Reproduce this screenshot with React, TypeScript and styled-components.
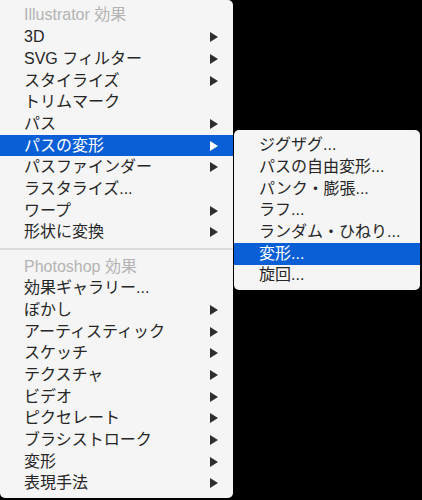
import React from "react";
import styled, { createGlobalStyle } from "styled-components";

const Global = createGlobalStyle`
  html, body {
    margin: 0;
    padding: 0;
    background: #000;
    height: 500px;
    overflow: hidden;
  }
  #root {
    height: 500px;
  }
`;

const Stage = styled.div`
  display: flex;
  align-items: flex-start;
  height: 500px;
  font-family: "Liberation Sans", "Noto Sans CJK JP", sans-serif;
  font-size: 16px;
`;

const Menu = styled.div`
  width: 233px;
  background: #f5f5f5;
  border-radius: 0 5px 5px 5px;
  padding: 4.65px 0 3.5px 0;
  box-sizing: border-box;
  display: flex;
  flex-direction: column;
`;

const SubMenu = styled.div`
  width: 186px;
  margin-top: 130px;
  margin-left: 1px;
  background: #f5f5f5;
  border-radius: 5px;
  padding: 4.5px 0 3.5px 0;
  display: flex;
  flex-direction: column;
  box-shadow: 0 0 0 0.5px rgba(0, 0, 0, 0.25);
`;

const Row = styled.div<{ $active?: boolean; $header?: boolean; $indent?: number }>`
  height: 21.7px;
  display: flex;
  align-items: center;
  justify-content: space-between;
  padding: 0 15px 0 ${(p) => p.$indent ?? 24}px;
  background: ${(p) => (p.$active ? "#0a5fd6" : "transparent")};
  color: ${(p) => (p.$header ? "#b3b3b3" : p.$active ? "#ffffff" : "#262626")};
  white-space: nowrap;
  line-height: 1;
`;

const Label = styled.span`
  display: block;
`;

const Separator = styled.div`
  height: 12.5px;
  display: flex;
  align-items: center;
  &::after {
    content: "";
    display: block;
    width: 100%;
    height: 2px;
    background: #dcdcdc;
  }
`;

const Arrow = ({ color }: { color: string }) => (
  <svg width="8" height="10" viewBox="0 0 8 10">
    <polygon points="0,0 8,5 0,10" fill={color} />
  </svg>
);

type Item = { label: string; sub?: boolean; active?: boolean; header?: boolean };

const group1: Item[] = [
  { label: "Illustrator 効果", header: true },
  { label: "3D", sub: true },
  { label: "SVG フィルター", sub: true },
  { label: "スタイライズ", sub: true },
  { label: "トリムマーク" },
  { label: "パス", sub: true },
  { label: "パスの変形", sub: true, active: true },
  { label: "パスファインダー", sub: true },
  { label: "ラスタライズ..." },
  { label: "ワープ", sub: true },
  { label: "形状に変換", sub: true },
];

const group2: Item[] = [
  { label: "Photoshop 効果", header: true },
  { label: "効果ギャラリー..." },
  { label: "ぼかし", sub: true },
  { label: "アーティスティック", sub: true },
  { label: "スケッチ", sub: true },
  { label: "テクスチャ", sub: true },
  { label: "ビデオ", sub: true },
  { label: "ピクセレート", sub: true },
  { label: "ブラシストローク", sub: true },
  { label: "変形", sub: true },
  { label: "表現手法", sub: true },
];

const subItems: Item[] = [
  { label: "ジグザグ..." },
  { label: "パスの自由変形..." },
  { label: "パンク・膨張..." },
  { label: "ラフ..." },
  { label: "ランダム・ひねり..." },
  { label: "変形...", active: true },
  { label: "旋回..." },
];

const renderRow = (it: Item, indent?: number) => (
  <Row key={it.label} $active={it.active} $header={it.header} $indent={indent}>
    <Label>{it.label}</Label>
    {it.sub && <Arrow color={it.active ? "#ffffff" : "#2e2e2e"} />}
  </Row>
);

export default function App() {
  return (
    <>
      <Global />
      <Stage>
        <Menu>
          {group1.map((it) => renderRow(it))}
          <Separator />
          {group2.map((it) => renderRow(it))}
        </Menu>
        <SubMenu>{subItems.map((it) => renderRow(it, 25))}</SubMenu>
      </Stage>
    </>
  );
}
